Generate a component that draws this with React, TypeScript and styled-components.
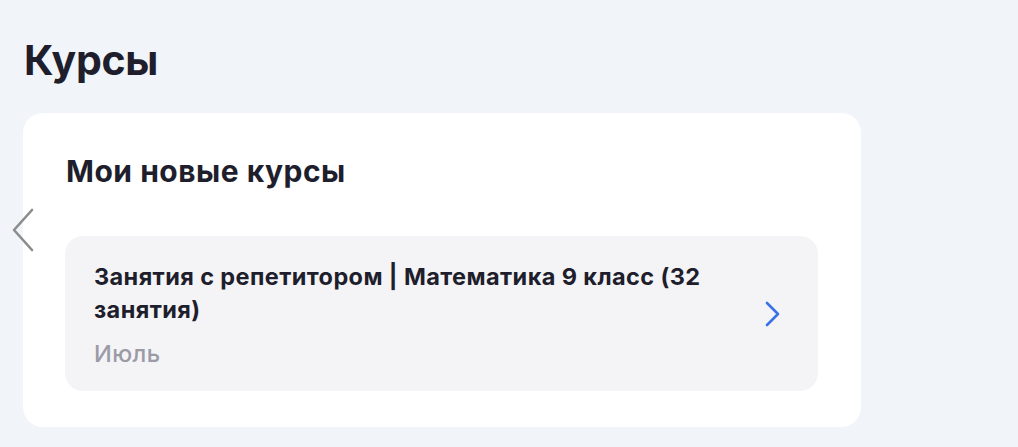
import React from "react";
import styled, { createGlobalStyle } from "styled-components";

interface Course {
  title: string;
  period: string;
}

const courses: Course[] = [
  {
    title: "Занятия с репетитором | Математика 9 класс (32 занятия)",
    period: "Июль",
  },
];

const GlobalStyle = createGlobalStyle`
  html, body {
    margin: 0;
    padding: 0;
    background: #f1f4f9;
  }
  body {
    font-family: Inter, "Noto Sans", "Liberation Sans", sans-serif;
    color: #1e1e2c;
    -webkit-font-smoothing: antialiased;
  }
`;

const Page = styled.main`
  width: 1018px;
  height: 447px;
  box-sizing: border-box;
  padding: 32px 0 0 23px;
  overflow: hidden;
`;

const PageTitle = styled.h1`
  margin: 0 0 25px 1px;
  font-size: 41px;
  line-height: 56px;
  font-weight: 700;
  letter-spacing: -0.3px;
`;

const Section = styled.section`
  position: relative;
  width: 838px;
  box-sizing: border-box;
  background: #ffffff;
  border-radius: 20px;
  padding: 40px 43px 36px 42px;
`;

const SectionTitle = styled.h2`
  margin: 0 0 47px 1px;
  font-size: 30px;
  line-height: 36px;
  font-weight: 700;
  letter-spacing: 0.5px;
`;

const NavButton = styled.button`
  position: absolute;
  left: -14px;
  top: 94px;
  width: 28px;
  height: 46px;
  padding: 0;
  border: none;
  background: transparent;
  display: flex;
  align-items: center;
  justify-content: center;
  cursor: pointer;
`;

const CourseCard = styled.a`
  display: flex;
  align-items: center;
  gap: 40px;
  background: #f4f4f7;
  border-radius: 18px;
  padding: 24px 36px 23px 29px;
  min-height: 155px;
  box-sizing: border-box;
  text-decoration: none;
  color: inherit;
`;

const CourseInfo = styled.div`
  flex: 1;
  display: flex;
  flex-direction: column;
  gap: 14px;
  align-self: flex-start;
`;

const CourseTitle = styled.div`
  font-size: 23.5px;
  line-height: 33px;
  font-weight: 700;
  letter-spacing: 0.4px;
`;

const CoursePeriod = styled.div`
  font-size: 23.5px;
  line-height: 28px;
  font-weight: 500;
  letter-spacing: 0.4px;
  color: #9b9ba6;
`;

const ChevronLeft = () => (
  <svg width="26" height="46" viewBox="0 0 26 46" fill="none">
    <path
      d="M22 3 L4 23 L22 43"
      stroke="#8c8c8c"
      strokeWidth="2.6"
      strokeLinecap="round"
      strokeLinejoin="round"
    />
  </svg>
);

const ChevronRight = () => (
  <svg width="18" height="26" viewBox="0 0 18 26" fill="none">
    <path
      d="M3 2 L14 13 L3 24"
      stroke="#3a72e6"
      strokeWidth="2.6"
      strokeLinecap="round"
      strokeLinejoin="round"
    />
  </svg>
);

export default function App() {
  return (
    <>
      <GlobalStyle />
      <Page>
        <PageTitle>Курсы</PageTitle>
        <Section>
          <NavButton aria-label="Назад">
            <ChevronLeft />
          </NavButton>
          <SectionTitle>Мои новые курсы</SectionTitle>
          {courses.map((course) => (
            <CourseCard key={course.title} href="#">
              <CourseInfo>
                <CourseTitle>{course.title}</CourseTitle>
                <CoursePeriod>{course.period}</CoursePeriod>
              </CourseInfo>
              <ChevronRight />
            </CourseCard>
          ))}
        </Section>
      </Page>
    </>
  );
}
